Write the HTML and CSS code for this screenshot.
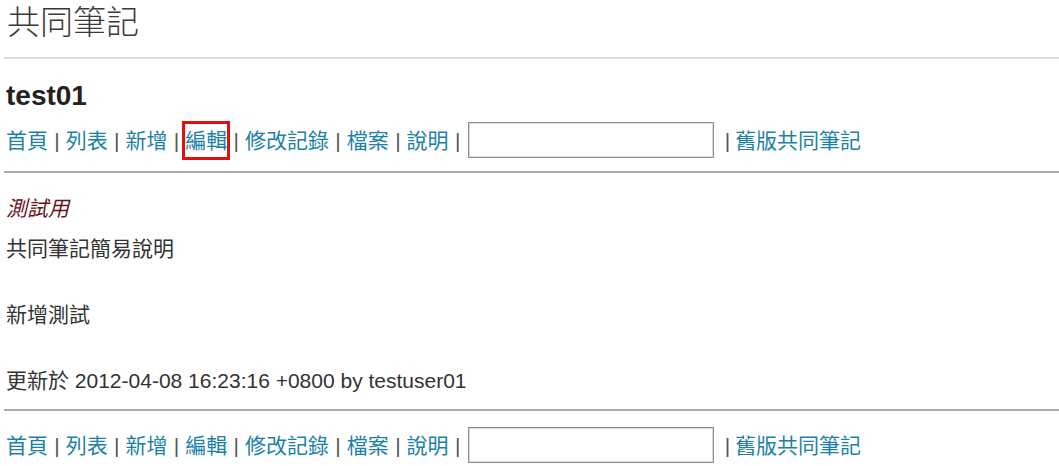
FILE: index.html
```html
<!DOCTYPE html>
<html lang="zh-Hant">
<head>
<meta charset="utf-8">
<title>共同筆記</title>
<link rel="stylesheet" href="styles.css">
</head>
<body>
<header class="site-header">
  <div class="site-title">共同筆記</div>
</header>
<hr class="rule rule-light">
<h2 class="page-title">test01</h2>
<nav class="nav">
  <a href="#">首頁</a><span class="sep">|</span>
  <a href="#">列表</a><span class="sep">|</span>
  <a href="#">新增</a><span class="sep">|</span>
  <a href="#" class="marked">編輯</a><span class="sep">|</span>
  <a href="#">修改記錄</a><span class="sep">|</span>
  <a href="#">檔案</a><span class="sep">|</span>
  <a href="#">說明</a><span class="sep">|</span>
  <input class="search" type="text">
  <span class="sep">|</span><a href="#" class="tight">舊版共同筆記</a>
</nav>
<hr class="rule rule-dark">
<main class="content">
  <p class="summary">測試用</p>
  <p class="para first">共同筆記簡易說明</p>
  <p class="para">新增測試</p>
  <p class="para">更新於 2012-04-08 16:23:16 +0800 by testuser01</p>
</main>
<hr class="rule rule-dark rule-bottom">
<nav class="nav">
  <a href="#">首頁</a><span class="sep">|</span>
  <a href="#">列表</a><span class="sep">|</span>
  <a href="#">新增</a><span class="sep">|</span>
  <a href="#">編輯</a><span class="sep">|</span>
  <a href="#">修改記錄</a><span class="sep">|</span>
  <a href="#">檔案</a><span class="sep">|</span>
  <a href="#">說明</a><span class="sep">|</span>
  <input class="search" type="text">
  <span class="sep">|</span><a href="#" class="tight">舊版共同筆記</a>
</nav>
</body>
</html>
```

FILE: styles.css
```css
html, body {
  background: #ffffff;
}
body {
  margin: 0;
  padding: 0 0 0 6px;
  font-family: "Liberation Sans", "Noto Sans CJK TC", sans-serif;
  font-size: 21px;
  color: #333333;
  overflow: hidden;
}
.site-header {
  padding-top: 7px;
}
.site-title {
  font-size: 33px;
  line-height: 32px;
  font-weight: 300;
  color: #3a3a3a;
  margin-left: 1px;
}
.rule {
  border: 0;
  height: 2px;
  margin: 0 0 0 -2px;
}
.rule-light {
  background: #dedede;
  margin-top: 18px;
}
.rule-dark {
  background: #ababab;
  margin-top: 12px;
}
.page-title {
  font-size: 28px;
  line-height: 32px;
  font-weight: bold;
  color: #222222;
  margin: 21px 0 0 0;
}
.nav {
  display: flex;
  align-items: center;
  height: 38px;
  margin-top: 9px;
  white-space: nowrap;
}
.nav a {
  color: #1b82a5;
  text-decoration: none;
  line-height: 24px;
  position: relative;
  top: 1px;
}
.nav .sep {
  color: #555555;
  padding: 0 6px 0 6.3px;
  line-height: 24px;
  position: relative;
  top: 1px;
}
.nav .tight {
  margin-left: -1px;
}
.nav .marked {
  line-height: 33px;
  top: 0;
  outline: 3px solid #e01010;
  outline-offset: 0;
}
.search {
  width: 244px;
  height: 34px;
  box-sizing: content-box;
  padding: 0;
  margin: 0 4px 0 2px;
  border: 1px solid #8f8f8f;
  box-shadow: inset 0 0 0 1px #dadada;
  background: #ffffff;
}
.content {
  padding-top: 24px;
}
.content p {
  margin: 0;
  line-height: 24px;
}
.summary {
  font-style: italic;
  color: #6b1020;
}
.para.first {
  margin-top: 16px;
}
.para + .para {
  margin-top: 42px;
}
.rule-bottom {
  margin-top: 16px;
}
.rule-bottom + .nav {
  margin-top: 15px;
}
```
